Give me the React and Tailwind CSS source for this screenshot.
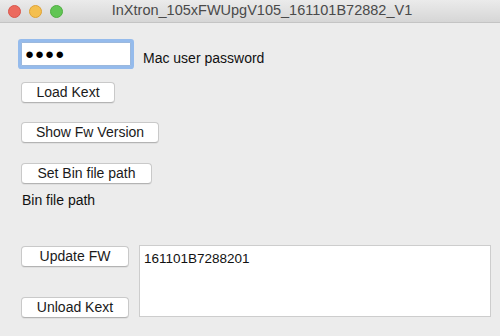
export default function App() {
  const btn =
    "h-[21px] shrink-0 bg-white border border-[#c9c9c9] border-b-[#b3b3b3] rounded-[4px] shadow-[0_1px_0_rgba(0,0,0,0.05)] text-[14px] leading-[19px] text-[#1a1a1a] text-center";
  return (
    <div
      className="w-[500px] h-[336px] bg-[#ececec] overflow-hidden flex flex-col"
      style={{ fontFamily: '"Liberation Sans", Arial, sans-serif' }}
    >
      {/* Title bar */}
      <div className="relative h-[23px] shrink-0 bg-gradient-to-b from-[#ebebeb] to-[#d6d6d6] border-b border-[#c4c4c4] flex items-center justify-center">
        <div className="absolute left-[8px] top-[5px] flex gap-[8px]">
          <span className="w-[13px] h-[13px] rounded-full bg-[#ec6a5e] border border-[#d9564b]" />
          <span className="w-[13px] h-[13px] rounded-full bg-[#f4bf4f] border border-[#dea236]" />
          <span className="w-[13px] h-[13px] rounded-full bg-[#61c554] border border-[#4fae41]" />
        </div>
        <span className="text-[14.5px] text-[#4a4a4a] pl-[24px]">
          InXtron_105xFWUpgV105_161101B72882_V1
        </span>
      </div>

      <div className="flex flex-col pl-[21px] pr-[9px] pt-[19px]">
        {/* Password */}
        <div className="flex items-start gap-[12px] h-[24px]">
          <div className="w-[110px] h-[24px] shrink-0 bg-white border border-[#9bb8dd] ring-[3px] ring-[#95bbec] rounded-[1px] flex items-center pl-[3px] text-[15px] tracking-[1px] text-black">
            ●●●●
          </div>
          <span className="text-[14px] leading-[17px] text-[#111] pt-[8px]">Mac user password</span>
        </div>

        <button className={btn + " w-[94px] mt-[16px]"}>Load Kext</button>
        <button className={btn + " w-[138px] mt-[19px]"}>Show Fw Version</button>
        <button className={btn + " w-[131px] mt-[20px]"}>Set Bin file path</button>

        <div className="mt-[8px] h-[17px] text-[14px] leading-[17px] text-[#111] pl-[1px]">
          Bin file path
        </div>

        {/* Bottom row */}
        <div className="flex gap-[10px] mt-[36px]">
          <div className="w-[108px] shrink-0 flex flex-col justify-between h-[73px] pt-[1px]">
            <button className={btn + " w-full"}>Update FW</button>
            <button className={btn + " w-full"}>Unload Kext</button>
          </div>
          <div className="w-[352px] shrink-0 h-[72px] bg-white border border-[#cdcdcd] px-[4px] pt-[5px] text-[13.5px] leading-[16px] text-[#111]">
            161101B7288201
          </div>
        </div>
      </div>
    </div>
  );
}
